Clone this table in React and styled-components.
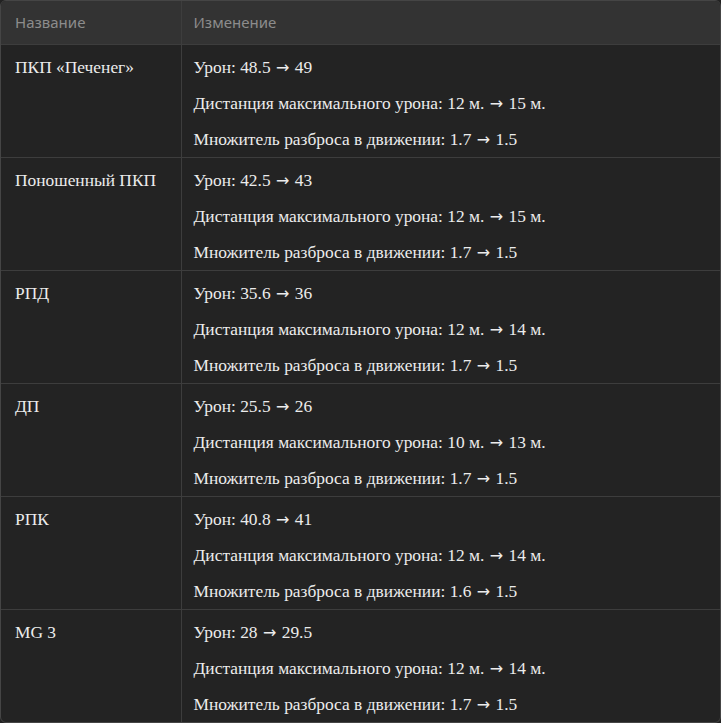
import React from 'react';
import styled, { createGlobalStyle } from 'styled-components';

const Global = createGlobalStyle`
  html, body {
    margin: 0;
    padding: 0;
    background: #222222;
  }
`;

const Wrap = styled.div`
  width: 719px;
  border: 1px solid #454545;
  border-radius: 6px;
  overflow: hidden;
  background: #232323;
`;

const Table = styled.table`
  width: 100%;
  border-collapse: collapse;
  table-layout: fixed;
`;

const HeadCell = styled.th`
  box-sizing: border-box;
  background: #333333;
  color: #8c8c8c;
  font-family: "Noto Sans", "Open Sans", sans-serif;
  font-weight: 400;
  font-size: 15px;
  text-align: left;
  height: 43px;
  padding: ${({ $first }) => ($first ? '0 14px' : '0 12px')};
  border-bottom: 1px solid #3d3d3d;
  border-left: ${({ $first }) => ($first ? 'none' : '1px solid #3d3d3d')};
  width: ${({ $w }) => $w || 'auto'};
`;

const Cell = styled.td`
  vertical-align: top;
  color: #ececec;
  font-family: "Liberation Serif", "Times New Roman", serif;
  font-size: 17.4px;
  line-height: 24px;
  padding: ${({ $first }) => ($first ? '10px 14px 6px 14px' : '10px 12px 6px 12px')};
  border-left: ${({ $first }) => ($first ? 'none' : '1px solid #3d3d3d')};
`;

const Row = styled.tr`
  border-top: 1px solid #3d3d3d;
  &:first-child { border-top: none; }
`;

const Line = styled.div`
  height: 24px;
  line-height: 24px;
  white-space: nowrap;
  & + & { margin-top: 12px; }
`;

const Arrow = styled.span`
  font-family: "DejaVu Sans", sans-serif;
  font-size: 16px;
  line-height: 0;
  margin: 0 1px;
`;

const Change = ({ label, from, to }) => (
  <Line>
    {label}: {from} <Arrow>→</Arrow> {to}
  </Line>
);

const data = [
  { name: 'ПКП «Печенег»', dmg: ['48.5', '49'], dist: ['12 м.', '15 м.'], spread: ['1.7', '1.5'] },
  { name: 'Поношенный ПКП', dmg: ['42.5', '43'], dist: ['12 м.', '15 м.'], spread: ['1.7', '1.5'] },
  { name: 'РПД', dmg: ['35.6', '36'], dist: ['12 м.', '14 м.'], spread: ['1.7', '1.5'] },
  { name: 'ДП', dmg: ['25.5', '26'], dist: ['10 м.', '13 м.'], spread: ['1.7', '1.5'] },
  { name: 'РПК', dmg: ['40.8', '41'], dist: ['12 м.', '14 м.'], spread: ['1.6', '1.5'] },
  { name: 'MG 3', dmg: ['28', '29.5'], dist: ['12 м.', '14 м.'], spread: ['1.7', '1.5'] },
];

export default function App() {
  return (
    <>
      <Global />
      <Wrap>
        <Table>
          <thead>
            <tr>
              <HeadCell $first $w="180px">Название</HeadCell>
              <HeadCell>Изменение</HeadCell>
            </tr>
          </thead>
          <tbody>
            {data.map((r) => (
              <Row key={r.name}>
                <Cell $first>{r.name}</Cell>
                <Cell>
                  <Change label="Урон" from={r.dmg[0]} to={r.dmg[1]} />
                  <Change label="Дистанция максимального урона" from={r.dist[0]} to={r.dist[1]} />
                  <Change label="Множитель разброса в движении" from={r.spread[0]} to={r.spread[1]} />
                </Cell>
              </Row>
            ))}
          </tbody>
        </Table>
      </Wrap>
    </>
  );
}
